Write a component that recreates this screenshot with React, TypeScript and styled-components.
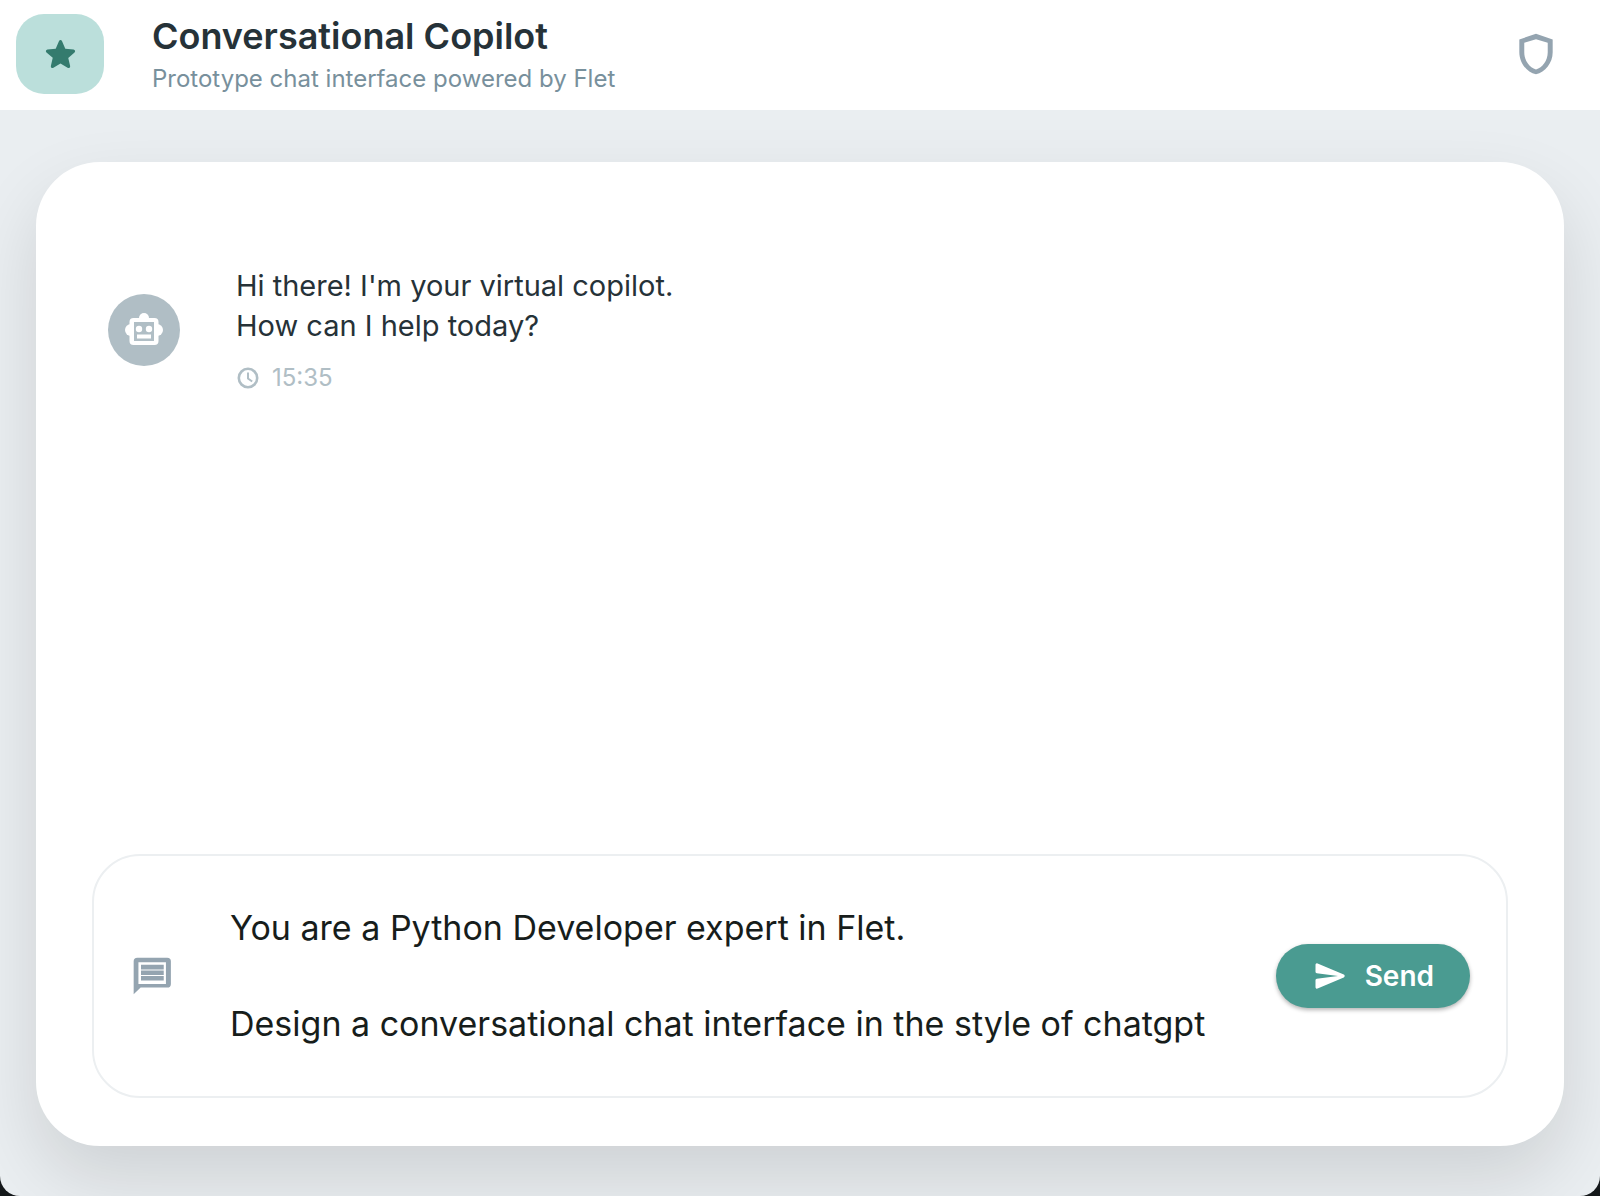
import React, { useState } from "react";
import styled, { createGlobalStyle } from "styled-components";

const GlobalStyle = createGlobalStyle`
  *, *::before, *::after { box-sizing: border-box; }
  body {
    margin: 0;
    background: #14181a;
    font-family: Inter, Roboto, "Liberation Sans", sans-serif;
  }
  h1, p { margin: 0; }
`;

const Window = styled.div`
  display: flex;
  flex-direction: column;
  min-height: 100vh;
  overflow: hidden;
  background: #eaeef1;
  border-radius: 0 0 20px 20px;
`;

const Header = styled.header`
  display: flex;
  align-items: center;
  padding: 13px 42px 15px 16px;
  background: #fff;
`;

const Logo = styled.div`
  display: grid;
  place-items: center;
  width: 88px;
  height: 80px;
  border-radius: 28px;
  background: #bbdfdb;
  color: #347b6e;
`;

const Heading = styled.div`
  display: flex;
  flex: 1;
  flex-direction: column;
  gap: 4px;
  margin-left: 48px;
`;

const Title = styled.h1`
  color: #263238;
  font-size: 36px;
  font-weight: 600;
  line-height: 46px;
`;

const Subtitle = styled.p`
  color: #78909c;
  font-size: 24px;
  line-height: 32px;
`;

const PlainButton = styled.button`
  display: grid;
  place-items: center;
  padding: 0;
  border: 0;
  background: none;
  color: #94a4b0;
`;

const Main = styled.main`
  flex: 1;
  display: flex;
  padding: 52px 36px 50px;
`;

const Panel = styled.section`
  flex: 1;
  display: flex;
  flex-direction: column;
  justify-content: space-between;
  gap: 48px;
  padding: 104px 56px 48px;
  border-radius: 64px;
  background: #fff;
  box-shadow: 0 32px 72px rgba(0, 0, 0, 0.12);
`;

const Message = styled.article`
  display: flex;
  align-items: center;
  gap: 56px;
  padding: 0 16px;
`;

const Avatar = styled.div`
  display: grid;
  place-items: center;
  width: 72px;
  height: 72px;
  border-radius: 50%;
  background: #b0bec5;
  color: #fff;
`;

const MessageText = styled.p`
  color: #263238;
  font-size: 29px;
  line-height: 40px;
  white-space: pre-line;
`;

const Timestamp = styled.div`
  display: flex;
  align-items: center;
  gap: 12px;
  margin-top: 16px;
  color: #b0bec5;
  font-size: 24px;
  line-height: 32px;
`;

const Composer = styled.form`
  display: flex;
  align-items: center;
  padding: 48px 36px;
  border: 2px solid #eceff1;
  border-radius: 48px;
`;

const PromptLabel = styled.label`
  display: grid;
  color: #94a4b0;
`;

const Prompt = styled.textarea`
  flex: 1;
  min-width: 0;
  height: 144px;
  margin: 0 24px 0 56px;
  padding: 0;
  border: 0;
  outline: 0;
  resize: none;
  overflow: hidden;
  background: none;
  color: #171d1b;
  font-family: inherit;
  font-size: 34px;
  line-height: 48px;
`;

const SendButton = styled.button`
  display: flex;
  align-items: center;
  justify-content: center;
  gap: 16px;
  height: 64px;
  padding: 0 36px;
  border: 0;
  border-radius: 32px;
  background: #4a9b91;
  box-shadow: 0 2px 4px rgba(0, 0, 0, 0.3);
  color: #fff;
  font-family: inherit;
  font-size: 28px;
  font-weight: 600;
  line-height: 40px;
`;

const StarIcon = () => (
  <svg width="41" height="41" viewBox="0 0 24 24" fill="currentColor" aria-hidden="true">
    <path d="M12 17.27l4.15 2.51c.76.46 1.69-.22 1.49-1.08l-1.1-4.72 3.67-3.18c.67-.58.31-1.68-.57-1.75l-4.83-.41-1.89-4.46c-.34-.81-1.5-.81-1.84 0L9.19 8.63l-4.83.41c-.88.07-1.24 1.17-.57 1.75l3.67 3.18-1.1 4.72c-.2.86.73 1.54 1.49 1.08l4.15-2.5z" />
  </svg>
);

const ShieldIcon = () => (
  <svg width="44" height="44" viewBox="0 0 24 24" fill="currentColor" aria-hidden="true">
    <path
      fillRule="evenodd"
      d="M12 .9L2.9 4.1V11c0 5.8 4.1 10.9 9.1 12.1 5-1.2 9.1-6.3 9.1-12.1V4.1L12 .9zM12 3.9l6.4 2V11c0 4.6-2.9 8.4-6.4 9.4-3.5-1-6.4-4.8-6.4-9.4V5.9l6.4-2z"
    />
  </svg>
);

const RobotIcon = () => (
  <svg width="40" height="40" viewBox="16 16 40 40" fill="currentColor" aria-hidden="true">
    <circle cx="36" cy="24" r="5" />
    <circle cx="23" cy="36" r="6" />
    <circle cx="49" cy="36" r="6" />
    <path
      fillRule="evenodd"
      d="M25.500 24h21a4 4 0 0 1 4 4v19a4 4 0 0 1-4 4h-21a4 4 0 0 1-4-4V28a4 4 0 0 1 4-4zM26 28v19h20V28z"
    />
    <rect x="26" y="28" width="20" height="19" fill="#b0bec5" />
    <circle cx="31" cy="35" r="3.200" />
    <circle cx="41" cy="35" r="3.200" />
    <rect x="29" y="40.500" width="14" height="4" />
  </svg>
);

const ClockIcon = () => (
  <svg width="24" height="24" viewBox="0 0 24 24" fill="none" stroke="currentColor" strokeWidth="2.600" aria-hidden="true">
    <circle cx="12" cy="12" r="9.200" />
    <path d="M12 6.500v6l4.200 3" strokeWidth="2" />
  </svg>
);

const MessageIcon = () => (
  <svg width="44" height="44" viewBox="0 0 24 24" fill="currentColor" aria-hidden="true">
    <path
      fillRule="evenodd"
      d="M4 2h16.300a2 2 0 0 1 2 2v12.300a2 2 0 0 1-2 2H5.800L2 22V4a2 2 0 0 1 2-2zM4.600 4.500v11.800h15V4.500z"
    />
    <path d="M6 5.900h12.400v2.500H6zM6 9h12.400v2.400H6zM6 12h12.400v2.500H6z" />
  </svg>
);

const SendIcon = () => (
  <svg width="37" height="36" viewBox="0 0 24 24" fill="currentColor" aria-hidden="true">
    <path d="M3.4 20.4l17.45-7.48a1 1 0 0 0 0-1.84L3.4 3.6a.993.993 0 0 0-1.39.91L2 9.12c0 .5.37.93.87.99L17 12 2.87 13.88c-.5.07-.87.5-.87 1l.01 4.61c0 .71.73 1.2 1.39.91z" />
  </svg>
);

export default function App() {
  const [prompt, setPrompt] = useState(
    "You are a Python Developer expert in Flet.\n\nDesign a conversational chat interface in the style of chatgpt"
  );

  return (
    <>
      <GlobalStyle />
      <Window>
        <Header>
          <Logo>
            <StarIcon />
          </Logo>
          <Heading>
            <Title>Conversational Copilot</Title>
            <Subtitle>Prototype chat interface powered by Flet</Subtitle>
          </Heading>
          <PlainButton type="button" aria-label="Privacy">
            <ShieldIcon />
          </PlainButton>
        </Header>
        <Main>
          <Panel>
            <Message>
              <Avatar>
                <RobotIcon />
              </Avatar>
              <div>
                <MessageText>{"Hi there! I'm your virtual copilot.\nHow can I help today?"}</MessageText>
                <Timestamp>
                  <ClockIcon />
                  <time dateTime="15:35">15:35</time>
                </Timestamp>
              </div>
            </Message>
            <Composer onSubmit={(event) => event.preventDefault()}>
              <PromptLabel htmlFor="prompt" aria-label="Message">
                <MessageIcon />
              </PromptLabel>
              <Prompt
                id="prompt"
                value={prompt}
                spellCheck={false}
                onChange={(event) => setPrompt(event.target.value)}
              />
              <SendButton type="submit">
                <SendIcon />
                Send
              </SendButton>
            </Composer>
          </Panel>
        </Main>
      </Window>
    </>
  );
}
